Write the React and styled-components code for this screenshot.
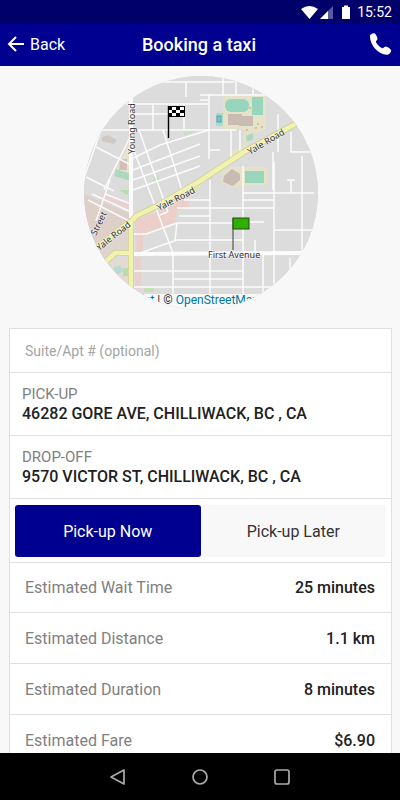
import React from "react";
import styled, { createGlobalStyle, css } from "styled-components";

const GlobalStyle = createGlobalStyle`
  * { box-sizing: border-box; }
  body { margin: 0; background: #f8f8f8; font-family: Roboto, sans-serif; color: #212121; }
  button, input { font: inherit; }
`;

const Screen = styled.div`
  display: flex;
  flex-direction: column;
  height: 100vh;
  min-height: 320px;
`;

const StatusBar = styled.div`
  display: flex;
  flex: none;
  align-items: center;
  justify-content: flex-end;
  height: 24px;
  padding-right: 8px;
  background: #00006b;
  color: #fff;
  font-size: 14px;
`;

const StatusIcons = styled.svg`
  width: 52px;
  height: 16px;
  margin-right: 5px;
`;

const Header = styled.header`
  display: grid;
  flex: none;
  grid-template-columns: 1fr auto 1fr;
  align-items: center;
  height: 42px;
  padding: 0 8px 2px 6px;
  background: #000090;
  color: #fff;
`;

const HeaderButton = styled.button`
  display: flex;
  align-items: center;
  justify-self: ${(p) => (p.$end ? "end" : "start")};
  gap: 5px;
  padding: 0;
  border: 0;
  background: none;
  color: inherit;
  font-size: 16px;
  svg { display: block; }
`;

const Title = styled.h1`
  margin: 0;
  font-size: 18px;
  font-weight: 500;
`;

const Content = styled.main`
  flex: 1;
  min-height: 0;
  overflow-y: auto;
  scrollbar-width: none;
  padding: 10px 8px 0 9px;
`;

const MapView = styled.div`
  position: relative;
  width: 234px;
  height: 234px;
  margin: 0 auto 18px;
  overflow: hidden;
  border-radius: 50%;
  background: #dcdcdc;
  > svg { display: block; width: 100%; height: 100%; }
`;

const Attribution = styled.div`
  position: absolute;
  right: 0;
  bottom: 0;
  left: 0;
  display: flex;
  justify-content: center;
  height: 16px;
  padding-right: 24px;
  background: #f8f8f8;
  color: #333;
  font-size: 12px;
  line-height: 13px;
  white-space: pre;
  a { color: #0078a8; text-decoration: none; }
`;

const Card = styled.section`
  border: 1px solid #e0e0e0;
  background: #fff;
`;

const SuiteInput = styled.input`
  display: block;
  width: 100%;
  height: 44px;
  padding: 0 15px;
  border: 0;
  border-bottom: 1px solid #e0e0e0;
  outline: 0;
  background: none;
  font-size: 14px;
  &::placeholder { color: #a4a4a4; opacity: 1; }
`;

const Address = styled.div`
  height: 63px;
  padding: 11px 12px 0;
  border-bottom: 1px solid #e0e0e0;
  font-size: 15px;
  line-height: 20px;
`;

const AddressLabel = styled.div`
  color: #808080;
`;

const AddressText = styled.div`
  font-size: 16px;
  font-weight: 500;
`;

const TimeSwitch = styled.div`
  display: grid;
  grid-template-columns: 1fr 1fr;
  height: 64px;
  padding: 6px 5px 5px;
  border-bottom: 1px solid #e0e0e0;
`;

const TimeButton = styled.button`
  border: 0;
  border-radius: 3px;
  background: #f8f8f8;
  color: #333;
  font-size: 16px;
  ${(p) => p.$active && css`
    background: #000090;
    color: #fff;
  `}
`;

const Estimates = styled.dl`
  margin: 0;
`;

const Estimate = styled.div`
  display: flex;
  align-items: center;
  justify-content: space-between;
  height: 51px;
  padding: 0 16px 0 15px;
  border-bottom: 1px solid #e0e0e0;
  font-size: 16px;
  &:first-child { height: 50px; }
  dt { color: #808080; }
  dd { margin: 0; font-weight: 500; }
`;

const NavBar = styled.nav`
  display: flex;
  flex: none;
  align-items: center;
  justify-content: center;
  gap: 58px;
  height: 47px;
  background: #000;
`;

const NavButton = styled.button`
  padding: 0;
  border: 0;
  background: none;
  color: #aaa;
  svg { display: block; }
`;

const estimates = [
  ["Estimated Wait Time", "25 minutes"],
  ["Estimated Distance", "1.1 km"],
  ["Estimated Duration", "8 minutes"],
  ["Estimated Fare", "$6.90"],
];

const minorRoads = [
  "M70 6H150 M102 6V21 M116 19H190 M139 0V19 M152 4V19 M169 10V19",
  "M42 28H125 M49 38H100 M69 28V54 M100 28V54 M12 54H152 M116 24H125",
  "M125 19V83 M125 74H136 M147 54V84 M156 54V76",
  "M49 72L89 177 M55 54L84 136 M79 54L99 118",
  "M49 82L76 69L125 54 M49 94L116 68 M49 104L116 80 M49 114L116 90",
  "M17 54L0 102 M12 71L45 88 M2 101L30 115 M46 61L20 114",
  "M26 104L12 145 M8 118L47 136 M4 124L47 146 M21 118L47 128",
  "M47 158H62L93 147H159 M56 177L93 164H159 M93 147L91 164 M93 132H190",
  "M47 195H159 M89 203H159 M47 211H190 M89 177V218",
  "M126 104V220 M159 90V220 M190 86V208 M179 179V220 M218 80V179",
  "M159 117H230 M159 124H190 M100 124H126 M95 140H126 M190 154H232",
  "M194 38V76 M207 56V76H226 M189 76V114 M207 104V117 M203 104H211 M149 146H180",
  "M171 164V177 M206 182V194 M76 139L83 136",
];

const yaleRoad =
  "M213 47L160 76L116 105L73 130L52 140L47 146V220 M47 145L10 174 M47 177H31L18 189";

function StreetMap() {
  return (
    <svg viewBox="0 0 234 234" aria-label="Map of the route" role="img">
      <rect width="234" height="234" fill="#dcdcdc" />
      <path d="M46 66L47 104L29 100Z" fill="#e6e3cf" />
      <path d="M32 93L47 98V105L30 100Z" fill="#acd8bf" />
      <path d="M36 83H43V94H35Z" fill="#d1c0b7" />
      <path d="M18 61L24 59L33 64L30 68L18 65Z" fill="#cfc9c5" />
      <path d="M70 102L74 101L75 105L71 107Z" fill="#b9dfb7" />
      <path d="M103 114L116 104V112L107 118Z" fill="#dcebad" />
      <path d="M100 55L117 54L100 59Z" fill="#c8dfc4" />
      <path d="M0 118L47 138V147L12 171L0 150Z" fill="#ddd0c9" />
      <path d="M18 116L47 127V136L15 124Z" fill="#ead1d1" />
      <path d="M35 114H46L43 119Z" fill="#b9dfa7" />
      <path d="M14 170L45 149V176L29 178L18 185Z" fill="#ded4d0" />
      <path d="M23 185L45 182V210H35Z" fill="#e3dad3" />
      <path d="M29 192L36 189L39 195L33 199Z" fill="#b6dbd3" />
      <path d="M39 192H45V200H39Z" fill="#bddbb0" />
      <path d="M51 144L73 136L103 119L106 131L93 135L91 146L62 157H51Z" fill="#eccfcb" />
      <path d="M52 157H59V177H52Z M51 181H57V213H51Z" fill="#e9d0cc" />
      <path d="M60 212H70V216H60Z" fill="#c3dfb5" />
      <path d="M139 20H182V53L166 60L163 76L146 82V75L160 70V53H140Z" fill="#e4e2c9" />
      <rect x="141" y="23" width="24" height="13" rx="6" fill="#98d5bd" />
      <rect x="168" y="21" width="11" height="18" fill="#98d5bd" />
      <path d="M144 38H158V40H169V50H155V49H144Z" fill="#cabbb2" />
      <path d="M162 60L169 57V63L163 66Z" fill="#a9d8bd" />
      <g fill="#d6b589">
        <circle cx="174" cy="48" r="1" /><circle cx="178" cy="51" r="1" />
        <circle cx="166" cy="32" r="1" /><circle cx="163" cy="54" r="1" />
        <circle cx="172" cy="52" r="1" />
      </g>
      <rect x="132" y="37" width="7" height="13" fill="#a9ddbf" />
      <rect x="133" y="40" width="4" height="6" fill="#7fc2d2" stroke="#5b9fb5" />
      <path d="M138 95L146 91H183V109H158L152 112L138 107Z" fill="#e4e2c9" />
      <path d="M140 100L148 93L156 98V104L149 110L139 106Z" fill="#cabbb2" />
      <rect x="161" y="95" width="19" height="12" fill="#98d5bd" />

      <g fill="none" stroke="#fff" strokeWidth="1.5" strokeOpacity="0.9">
        {minorRoads.map((d) => <path key={d} d={d} />)}
        <path d="M47 18V142 M47 178L230 177" strokeWidth="4" />
      </g>
      <g fill="none" strokeLinejoin="round">
        <path d={yaleRoad} stroke="#cdcd91" strokeWidth="6" />
        <path d={yaleRoad} stroke="#f1f2ad" strokeWidth="4.6" />
      </g>

      <g fill="#333" stroke="#fff" strokeOpacity="0.5" strokeWidth="1.5" paintOrder="stroke" fontFamily="Noto Sans, sans-serif" fontSize="9">
        <text transform="translate(51 78) rotate(-90)">Young Road</text>
        <text transform="translate(166 79) rotate(-31)">Yale Road</text>
        <text transform="translate(75 135) rotate(-27)">Yale Road</text>
        <text transform="translate(15 175) rotate(-38)">Yale Road</text>
        <text transform="translate(12 160) rotate(-64)">Street</text>
        <text x="124" y="182">First Avenue</text>
      </g>

      <path d="M84.500 30V62" stroke="#000" strokeWidth="1.4" />
      <rect x="84" y="30" width="17" height="11" fill="#000" />
      <path d="M88 31h4v3h-4z M96 31h4v3h-4z M85 34h3v3h-3z M92 34h4v3h-4z M88 37h4v3h-4z M96 37h4v3h-4z" fill="#fff" />
      <path d="M149 142V174" stroke="#555" strokeWidth="1.2" />
      <rect x="149" y="142" width="16" height="11" fill="#32ad00" stroke="#17540a" />
    </svg>
  );
}

export default function App() {
  const [when, setWhen] = React.useState("now");
  return (
    <>
      <GlobalStyle />
      <Screen>
        <StatusBar>
          <StatusIcons viewBox="0 0 52 16" aria-hidden="true" fill="#fff">
            <path d="M1 5Q9.500-1 18 5L9.500 15Z" />
            <path d="M33 2V15H20Z" opacity="0.35" />
            <path d="M28 7V15H20Z" />
            <path d="M42 3H44V1.500H48V3H50V15H42Z" />
          </StatusIcons>
          15:52
        </StatusBar>
        <Header>
          <HeaderButton type="button">
            <svg width="19" height="18" viewBox="0 0 19 18" fill="none" stroke="#fff" strokeWidth="2" aria-hidden="true">
              <path d="M18 9H3 M10 2L3 9L10 16" />
            </svg>
            Back
          </HeaderButton>
          <Title>Booking a taxi</Title>
          <HeaderButton type="button" $end aria-label="Call">
            <svg width="24" height="24" viewBox="0 0 24 24" aria-hidden="true">
              <path d="M2 4.500C1.500 3 4 1.200 6 1.200C7.500 1.200 9.500 5 9.500 6.800C9.500 8.200 7.800 8.800 7.900 9.800C8.500 12 12 15.500 14.500 16.200C15.500 16.200 16.500 14.500 17.800 14.500C19.500 14.700 23.200 17.200 23.200 18.700C23 20.500 20.700 22.800 19 22.800C10 22.300 2 13 2 4.500Z" fill="#fff" />
            </svg>
          </HeaderButton>
        </Header>
        <Content>
          <MapView>
            <StreetMap />
            <Attribution>
              <a href="#leaflet">Leaflet</a> | © <a href="#osm">OpenStreetMap</a>
            </Attribution>
          </MapView>
          <Card>
            <SuiteInput type="text" aria-label="Suite or apartment number" placeholder="Suite/Apt # (optional)" />
            <Address>
              <AddressLabel>PICK-UP</AddressLabel>
              <AddressText>46282 GORE AVE, CHILLIWACK, BC , CA</AddressText>
            </Address>
            <Address>
              <AddressLabel>DROP-OFF</AddressLabel>
              <AddressText>9570 VICTOR ST, CHILLIWACK, BC , CA</AddressText>
            </Address>
            <TimeSwitch>
              <TimeButton type="button" $active={when === "now"} onClick={() => setWhen("now")}>Pick-up Now</TimeButton>
              <TimeButton type="button" $active={when === "later"} onClick={() => setWhen("later")}>Pick-up Later</TimeButton>
            </TimeSwitch>
            <Estimates>
              {estimates.map(([label, value]) => (
                <Estimate key={label}><dt>{label}</dt><dd>{value}</dd></Estimate>
              ))}
            </Estimates>
          </Card>
        </Content>
        <NavBar>
          <NavButton type="button" aria-label="Back">
            <svg width="24" height="20" viewBox="0 0 24 20" fill="none" stroke="currentColor" strokeWidth="1.7" strokeLinejoin="round"><path d="M18 3V17L5 10Z" /></svg>
          </NavButton>
          <NavButton type="button" aria-label="Home">
            <svg width="24" height="20" viewBox="0 0 24 20" fill="none" stroke="currentColor" strokeWidth="1.7"><circle cx="12" cy="10" r="7" /></svg>
          </NavButton>
          <NavButton type="button" aria-label="Recent apps">
            <svg width="24" height="20" viewBox="0 0 24 20" fill="none" stroke="currentColor" strokeWidth="1.7"><rect x="5" y="3" width="14" height="14" rx="2" /></svg>
          </NavButton>
        </NavBar>
      </Screen>
    </>
  );
}
